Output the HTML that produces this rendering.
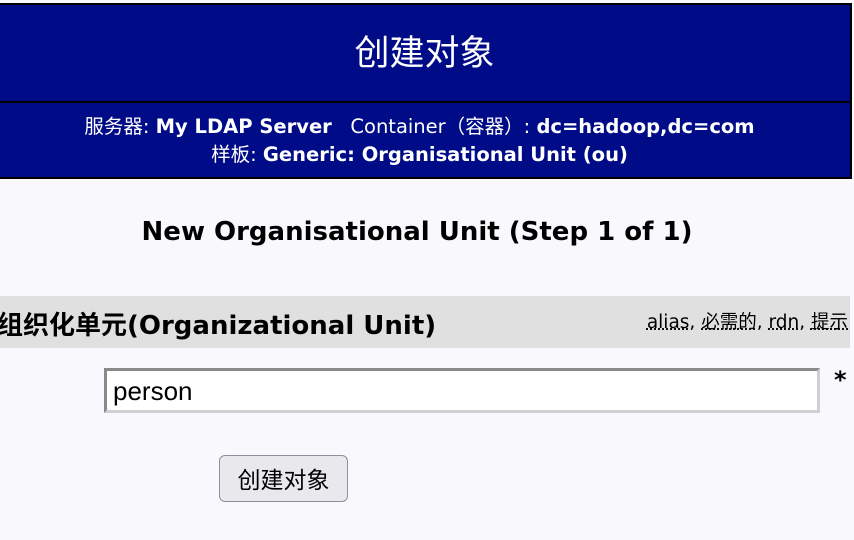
<!DOCTYPE html>
<html><head><meta charset="utf-8"><style>
body{margin:0;width:854px;height:540px;background:#f9f9fd;font-family:"DejaVu Sans","Noto Sans CJK SC",sans-serif;position:relative;overflow:hidden}
.h1{position:absolute;left:-3px;top:3px;width:851px;height:97px;background:#000b87;border:2px solid #000;color:#fff;font-family:"Liberation Sans","Noto Sans CJK SC",sans-serif;font-size:35px;text-align:center;line-height:97px}
.h2{position:absolute;left:-3px;top:101px;width:851px;height:74px;background:#000b87;border:2px solid #000;color:#fff;font-size:19.5px;text-align:center;line-height:28px}
.h2 .in{padding-top:10px;padding-right:10px}
.t{position:absolute;top:217px;left:0;width:834px;text-align:center;font-weight:bold;font-size:26px}
.bar{position:absolute;left:0;top:296px;width:850px;height:52px;background:#e0e0e0}
.bar .l{position:absolute;left:-3px;top:9px;font-weight:bold;font-size:26px}
.bar .r{position:absolute;right:2px;top:12px;font-size:18.5px}
.bar .r u{text-decoration:underline dotted}
.inp{position:absolute;left:104px;top:368px;width:704px;height:39px;background:#fff;border-style:solid;border-width:3px;border-color:#8a8a8a #d0d0d0 #d0d0d0 #8a8a8a;font-family:"Liberation Sans",sans-serif;font-size:26px;line-height:41px;padding-left:6px;box-sizing:content-box}
.star{position:absolute;left:834px;top:366px;font-size:24px;font-weight:bold}
.btn{position:absolute;left:219px;top:455px;width:127px;height:45px;background:#e9e9ed;border:1.5px solid #8f8f9d;border-radius:6px;font-family:"Noto Sans CJK SC",sans-serif;font-size:23px;text-align:center;line-height:44px}
</style></head><body>
<div class="h1">创建对象</div>
<div class="h2"><div class="in">服务器: <b>My LDAP Server</b> &nbsp; Container（容器）: <b>dc=hadoop,dc=com</b><br>样板: <b>Generic: Organisational Unit (ou)</b></div></div>
<div class="t">New Organisational Unit (Step 1 of 1)</div>
<div class="bar"><div class="l">组织化单元(Organizational Unit)</div><div class="r"><u>alias</u>, <u>必需的</u>, <u>rdn</u>, <u>提示</u></div></div>
<div class="inp">person</div>
<div class="star">*</div>
<div class="btn">创建对象</div>
</body></html>
